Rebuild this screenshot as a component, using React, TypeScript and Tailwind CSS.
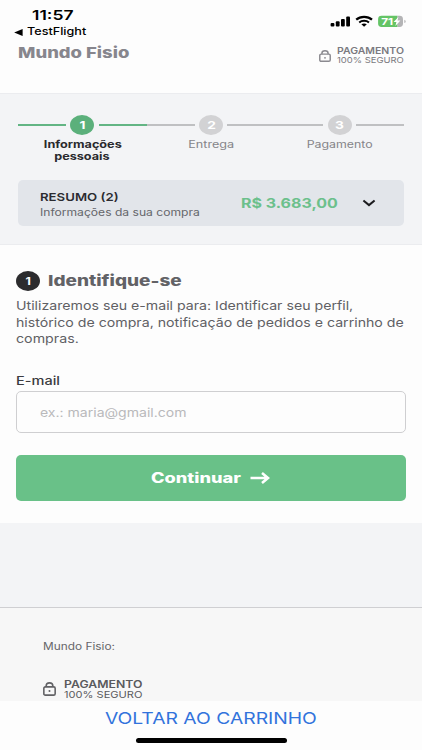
import { clsx } from "clsx";

const steps = [
  {
    id: 1,
    lines: ["Informações", "pessoais"],
    circle: "bg-[#5bb07b]",
    text: "font-bold text-[#2a2a2e] scale-x-[1.265]",
    before: "bg-[#63b584]",
    after: "bg-[#63b584]",
  },
  {
    id: 2,
    lines: ["Entrega"],
    circle: "bg-[#d2d2d4]",
    text: "text-[#858589] scale-x-[1.265]",
    before: "bg-[#bfc0c2]",
    after: "bg-[#bfc0c2]",
  },
  {
    id: 3,
    lines: ["Pagamento"],
    circle: "bg-[#d2d2d4]",
    text: "text-[#858589] scale-x-[1.235]",
    before: "bg-[#bfc0c2]",
    after: "bg-[#bfc0c2]",
  },
];

function Wide({ children, className }: { children: React.ReactNode; className?: string }) {
  return <span className={clsx("block w-max whitespace-nowrap", className)}>{children}</span>;
}

function Lock({ className }: { className?: string }) {
  return (
    <svg
      viewBox="0 0 14 15"
      preserveAspectRatio="none"
      fill="none"
      stroke="currentColor"
      strokeWidth="1.7"
      className={clsx("shrink-0", className)}
    >
      <rect x="0.9" y="5.2" width="12.2" height="8.9" rx="1.6" />
      <path d="M3.4 5.2V4.2a3.6 3.3 0 0 1 7.2 0v1" />
      <circle cx="7" cy="9.7" r="1.1" fill="currentColor" stroke="none" />
    </svg>
  );
}

function StatusIcons() {
  return (
    <svg viewBox="0 0 78 14" className="h-[14px] w-[78px]">
      <g fill="#000">
        <rect x="0.6" y="9" width="3.8" height="3.6" rx="1" />
        <rect x="5.8" y="7.3" width="3.8" height="5.3" rx="1" />
        <rect x="11" y="5" width="3.8" height="7.6" rx="1" />
        <rect x="16.2" y="2.6" width="3.8" height="10" rx="1" />
      </g>
      <g fill="none" stroke="#000">
        <path d="M26.2 5.7c4.2-3.7 11.6-3.7 15.8 0" strokeWidth="2.2" />
        <path d="M29.2 8.4c2.7-2.3 7.1-2.3 9.8 0" strokeWidth="2" />
      </g>
      <path d="M31.4 10.3c1.4-1.2 4-1.2 5.4 0L34.1 12.7Z" fill="#000" />
      <path d="M51.5 1.8H67.6V13H51.5a3.4 3.4 0 0 1-3.4-3.4V5.2a3.4 3.4 0 0 1 3.4-3.4Z" fill="#64c466" />
      <path d="M67.6 1.8h2a3.4 3.4 0 0 1 3.4 3.4v4.4a3.4 3.4 0 0 1-3.4 3.4h-2Z" fill="#b4b4b6" />
      <path d="M74.3 5.8c1.9.5 1.9 2.8 0 3.3Z" fill="#b4b4b6" />
      <text
        x="51.2"
        y="10.8"
        fontSize="9.6"
        fontWeight="700"
        fill="#fff"
        textLength="12"
        lengthAdjust="spacingAndGlyphs"
      >
        71
      </text>
      <path d="M68.4 3.1 63.6 8h2.8l-1 3.9 5-5.3h-2.9Z" fill="#fff" />
    </svg>
  );
}

function Header() {
  return (
    <header className="flex h-[93px] justify-between">
      <div className="pt-[7px]">
        <Wide className="ml-8 h-4 origin-left scale-x-[1.3] text-[13.5px] leading-4 font-semibold text-black">
          11:57
        </Wide>
        <div className="mt-px flex h-4 items-center gap-[4px] pl-[14px]">
          <svg viewBox="0 0 9 7" className="h-[7px] w-[9px]">
            <path d="M0.2 3.5 8.6 0V7Z" fill="#000" />
          </svg>
          <Wide className="origin-left scale-x-[1.2] text-[10.5px] leading-4 font-medium text-black">TestFlight</Wide>
        </div>
        <Wide className="mt-1 ml-[18px] origin-left scale-x-[1.23] text-[15px] leading-[18px] font-extrabold text-[#87868d]">
          Mundo Fisio
        </Wide>
      </div>
      <div className="w-[103px] pt-[14px]">
        <div className="ml-[11px]">
          <StatusIcons />
        </div>
        <div className="mt-[18px] flex items-center">
          <Lock className="mt-[1px] h-[12px] w-[12px] text-[#8b8a90]" />
          <div className="ml-[6px]">
            <Wide className="origin-left scale-x-[1.165] text-[9px] leading-[10px] font-semibold text-[#7b7a80]">
              PAGAMENTO
            </Wide>
            <Wide className="origin-left scale-x-[1.18] text-[8px] leading-[9px] text-[#7b7a80]">100% SEGURO</Wide>
          </div>
        </div>
      </div>
    </header>
  );
}

function Stepper() {
  return (
    <div className="grid grid-cols-3">
      {steps.map((s) => (
        <div key={s.id}>
          <div className="flex items-center justify-between">
            <div className={clsx("h-[2px] w-12", s.before)} />
            <div
              className={clsx(
                "flex h-5 w-6 items-center justify-center rounded-[50%] pt-px text-[11px] font-bold text-white",
                s.circle
              )}
            >
              <span className="scale-x-[1.25]">{s.id}</span>
            </div>
            <div className={clsx("h-[2px] w-12", s.after)} />
          </div>
          <div className="mt-[2.5px] flex flex-col items-center">
            {s.lines.map((line) => (
              <Wide key={line} className={clsx("text-[10px] leading-[12px]", s.text)}>
                {line}
              </Wide>
            ))}
          </div>
        </div>
      ))}
    </div>
  );
}

function Summary() {
  return (
    <div className="flex h-[46px] items-center rounded-[5px] bg-[#e2e5ea] pl-[22px]">
      <div className="w-[201px] pt-[3px]">
        <Wide className="origin-left scale-x-[1.2] text-[11px] leading-[15px] font-semibold text-[#2b2b30]">
          RESUMO (2)
        </Wide>
        <Wide className="origin-left scale-x-[1.21] text-[10px] leading-[15px] text-[#65666b]">
          Informações da sua compra
        </Wide>
      </div>
      <Wide className="origin-left scale-x-[1.23] text-[13px] leading-4 font-bold text-[#6cc08c]">R$ 3.683,00</Wide>
      <svg viewBox="0 0 14 8" fill="none" stroke="#1c1c1f" strokeWidth="2" className="ml-[42px] h-2 w-[14px]">
        <path d="M1.4 1.4 7 6.1l5.6-4.7" />
      </svg>
    </div>
  );
}

function Identify() {
  return (
    <section className="h-[278px] px-4 pt-[26px]">
      <div className="flex items-center">
        <div className="flex h-5 w-6 items-center justify-center rounded-[50%] bg-[#2c2c2e] text-[10px] font-bold text-white">
          <span className="scale-x-[1.25]">1</span>
        </div>
        <Wide className="ml-[8px] origin-left scale-x-[1.265] text-[15px] leading-5 font-extrabold text-[#626266]">
          Identifique-se
        </Wide>
      </div>
      <div className="mt-[7px] text-[12px] leading-[16.6px] text-[#606064]">
        <Wide className="origin-left scale-x-[1.18]">Utilizaremos seu e-mail para: Identificar seu perfil,</Wide>
        <Wide className="origin-left scale-x-[1.18]">histórico de compra, notificação de pedidos e carrinho de</Wide>
        <Wide className="origin-left scale-x-[1.185]">compras.</Wide>
      </div>
      <Wide className="mt-[25px] origin-left scale-x-[1.265] text-[11.5px] leading-4 font-medium text-[#3b3b3f]">
        E-mail
      </Wide>
      <div className="mt-[2px] flex h-[42px] items-center rounded-[5px] border border-[#cfcfd1] pt-[2px] pl-[23px]">
        <Wide className="origin-left scale-x-[1.17] text-[12px] text-[#b9b9bb]">ex.: maria@gmail.com</Wide>
      </div>
      <button className="mt-[22px] flex h-[46px] w-full items-center rounded-[5px] bg-[#69c188] pl-[135px] text-white">
        <Wide className="origin-left scale-x-[1.3] text-[14px] font-extrabold">Continuar</Wide>
        <svg viewBox="0 0 20 12" fill="none" stroke="#fff" strokeWidth="2.6" className="mt-px ml-[30px] h-3 w-5">
          <path d="M0.5 6h17M12 1l6 5-6 5" />
        </svg>
      </button>
    </section>
  );
}

export default function App() {
  return (
    <div className="flex h-[750px] w-[422px] flex-col overflow-hidden bg-[#fdfdfd] font-['Inter',sans-serif]">
      <Header />
      <section className="h-[152px] border-y border-[#ebecef] bg-[#f3f4f6] px-[18px] pt-[21px]">
        <div className="h-[65px]">
          <Stepper />
        </div>
        <Summary />
      </section>
      <Identify />
      <div className="h-[84px] bg-[#f3f4f6]" />
      <footer className="h-[94px] border-t border-[#cfcfd2] bg-[#f7f7f7] pt-[31px] pl-[43px]">
        <Wide className="origin-left scale-x-[1.186] text-[10px] leading-[14px] text-[#666669]">Mundo Fisio:</Wide>
        <div className="mt-[26px] flex">
          <Lock className="mt-[3px] h-[14px] w-[13px] text-[#626265]" />
          <div className="ml-2">
            <Wide className="origin-left scale-x-[1.228] text-[10px] leading-[10px] font-semibold text-[#5a5a5d]">
              PAGAMENTO
            </Wide>
            <Wide className="origin-left scale-x-[1.168] text-[9.5px] leading-[11px] text-[#5a5a5d]">100% SEGURO</Wide>
          </div>
        </div>
      </footer>
      <div className="flex flex-1 flex-col items-center pt-[7px]">
        <Wide className="scale-x-[1.206] text-[16px] leading-5 text-[#3273dc]">VOLTAR AO CARRINHO</Wide>
        <div className="mt-[10px] h-[5px] w-[151px] rounded-full bg-black" />
      </div>
    </div>
  );
}
